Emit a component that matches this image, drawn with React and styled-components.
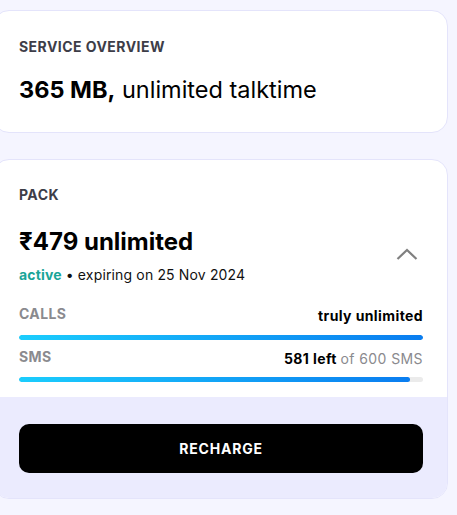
import React from "react";
import styled, { createGlobalStyle } from "styled-components";

const Global = createGlobalStyle`
  html, body { margin: 0; padding: 0; background: #f5f5ff; }
  body { font-family: Inter, "Noto Sans", sans-serif; color: #000; }
  * { box-sizing: border-box; }
`;

const Page = styled.div`
  display: flex;
  flex-direction: column;
  gap: 26px;
  padding: 10px 9px 16px 0;
  margin-left: -7px;
`;

const Card = styled.section`
  background: #fff;
  border: 1px solid #e4e4fb;
  border-radius: 16px;
  overflow: hidden;
`;

const Body = styled.div`
  padding: ${(p) => p.$pad};
`;

const Label = styled.div`
  font-size: 14px;
  line-height: 16px;
  font-weight: 700;
  color: #3d3d48;
  letter-spacing: 0.45px;
`;

const Headline = styled.div`
  margin-top: 20px;
  font-size: 23.5px;
  line-height: 30px;
  font-weight: 400;
  b { font-weight: 700; }
`;

const PackHead = styled.div`
  margin-top: 24px;
  display: flex;
  align-items: center;
  justify-content: space-between;
`;

const PackTitle = styled.div`
  font-size: 24px;
  line-height: 30px;
  font-weight: 700;
`;

const PackSub = styled.div`
  margin-top: 8px;
  font-size: 14px;
  line-height: 20px;
  letter-spacing: 0.15px;
  color: #111;
`;

const Active = styled.span`
  color: #1aa598;
  font-weight: 700;
`;

const Chevron = styled.svg`
  width: 22px;
  height: 12px;
  margin-right: 5px;
  margin-bottom: 4px;
`;

const Usage = styled.div`
  margin-top: ${(p) => p.$mt}px;
`;

const UsageRow = styled.div`
  display: flex;
  justify-content: space-between;
  align-items: flex-start;
`;

const UsageName = styled.div`
  font-size: 14px;
  line-height: 16px;
  font-weight: 700;
  letter-spacing: 0.4px;
  color: #8a8a8e;
`;

const UsageValue = styled.div`
  font-size: 14px;
  line-height: 16px;
  margin-top: 2px;
  font-weight: 700;
  letter-spacing: 0.4px;
  color: #000;
  span { font-weight: 400; color: #8a8a8e; }
`;

const Track = styled.div`
  margin-top: ${(p) => p.$mt}px;
  height: 5px;
  border-radius: 3px;
  background: #ebebeb;
  overflow: hidden;
`;

const Fill = styled.div`
  height: 100%;
  border-radius: 3px;
  background: linear-gradient(90deg, #1bcdfd 0%, #0a7df0 100%);
`;

const Footer = styled.div`
  background: #ebebfe;
  padding: 27px 24px 25px 25px;
`;

const Button = styled.button`
  display: block;
  width: 100%;
  height: 49px;
  border: none;
  border-radius: 10px;
  background: #000;
  color: #fff;
  font-family: inherit;
  font-size: 14px;
  font-weight: 700;
  letter-spacing: 0.8px;
  cursor: pointer;
`;

export default function App() {
  return (
    <>
      <Global />
      <Page>
        <Card>
          <Body $pad="28px 24px 27px 25px">
            <Label>SERVICE OVERVIEW</Label>
            <Headline>
              <b>365 MB,</b> unlimited talktime
            </Headline>
          </Body>
        </Card>
        <Card>
          <Body $pad="27px 24px 15px 25px">
            <Label>PACK</Label>
            <PackHead>
              <div>
                <PackTitle>₹479 unlimited</PackTitle>
                <PackSub>
                  <Active>active</Active> • expiring on 25 Nov 2024
                </PackSub>
              </div>
              <Chevron viewBox="0 0 22 12">
                <path d="M1.5 11 L11 2 L20.5 11" fill="none" stroke="#808080" strokeWidth="2.2" />
              </Chevron>
            </PackHead>
            <Usage $mt={21}>
              <UsageRow>
                <UsageName>CALLS</UsageName>
                <UsageValue>truly unlimited</UsageValue>
              </UsageRow>
              <Track $mt={11}>
                <Fill style={{ width: "100%" }} />
              </Track>
            </Usage>
            <Usage $mt={9}>
              <UsageRow>
                <UsageName>SMS</UsageName>
                <UsageValue>
                  581 left <span>of 600 SMS</span>
                </UsageValue>
              </UsageRow>
              <Track $mt={10}>
                <Fill style={{ width: `${(581 / 600) * 100}%` }} />
              </Track>
            </Usage>
          </Body>
          <Footer>
            <Button>RECHARGE</Button>
          </Footer>
        </Card>
      </Page>
    </>
  );
}
